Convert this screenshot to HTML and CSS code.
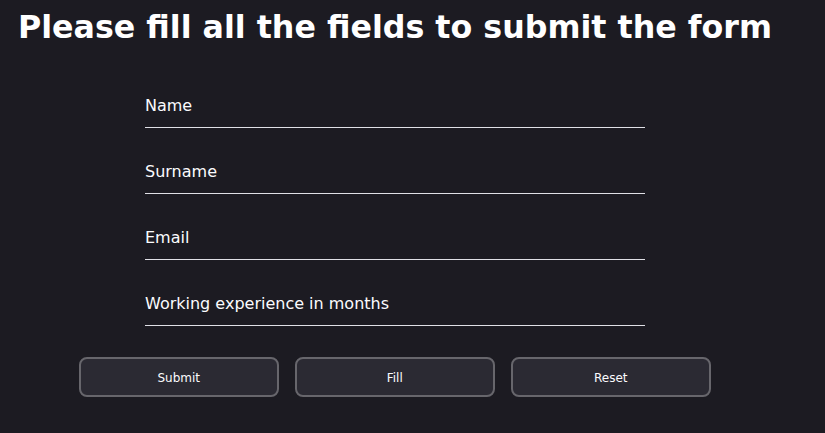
FILE: index.html
```html
<!DOCTYPE html>
<html>
<head>
<meta charset="utf-8">
<link rel="stylesheet" href="styles.css">
</head>
<body>
<h1 class="title">Please fill all the fields to submit the form</h1>
<form class="form">
  <div class="fields">
    <input class="field" type="text" placeholder="Name">
    <input class="field" type="text" placeholder="Surname">
    <input class="field" type="email" placeholder="Email">
    <input class="field" type="number" placeholder="Working experience in months">
  </div>
  <div class="buttons">
    <button class="btn" type="button">Submit</button>
    <button class="btn" type="button">Fill</button>
    <button class="btn" type="reset">Reset</button>
  </div>
</form>
</body>
</html>
```
FILE: styles.css
```css
html, body {
  margin: 0;
  padding: 0;
  background: #1c1b22;
  color: #fbfbfe;
  font-family: "DejaVu Sans", sans-serif;
}
body {
  padding: 8px 18px;
}
.title {
  margin: 0;
  font-size: 31.7px;
  font-weight: bold;
  line-height: 38px;
  color: #ffffff;
}
.form {
  display: flex;
  flex-direction: column;
  padding-left: 61px;
  margin-top: 40px;
}
.fields {
  display: flex;
  flex-direction: column;
  gap: 24px;
  padding-left: 66px;
}
.field {
  width: 500px;
  height: 42px;
  box-sizing: border-box;
  background: transparent;
  border: none;
  border-bottom: 1px solid #e0e0e6;
  padding: 0 0 2px 0;
  font-family: "DejaVu Sans", sans-serif;
  font-size: 16px;
  color: #fbfbfe;
  outline: none;
}
.field::placeholder {
  color: #fbfbfe;
  opacity: 1;
}
.buttons {
  display: flex;
  gap: 16.5px;
  margin-top: 31px;
}
.btn {
  width: 199.5px;
  height: 40px;
  box-sizing: border-box;
  background: #2b2a33;
  border: 2px solid #67666c;
  border-radius: 8px;
  color: #fbfbfe;
  font-family: "DejaVu Sans", sans-serif;
  font-size: 12px;
  padding-top: 2px;
}
```
